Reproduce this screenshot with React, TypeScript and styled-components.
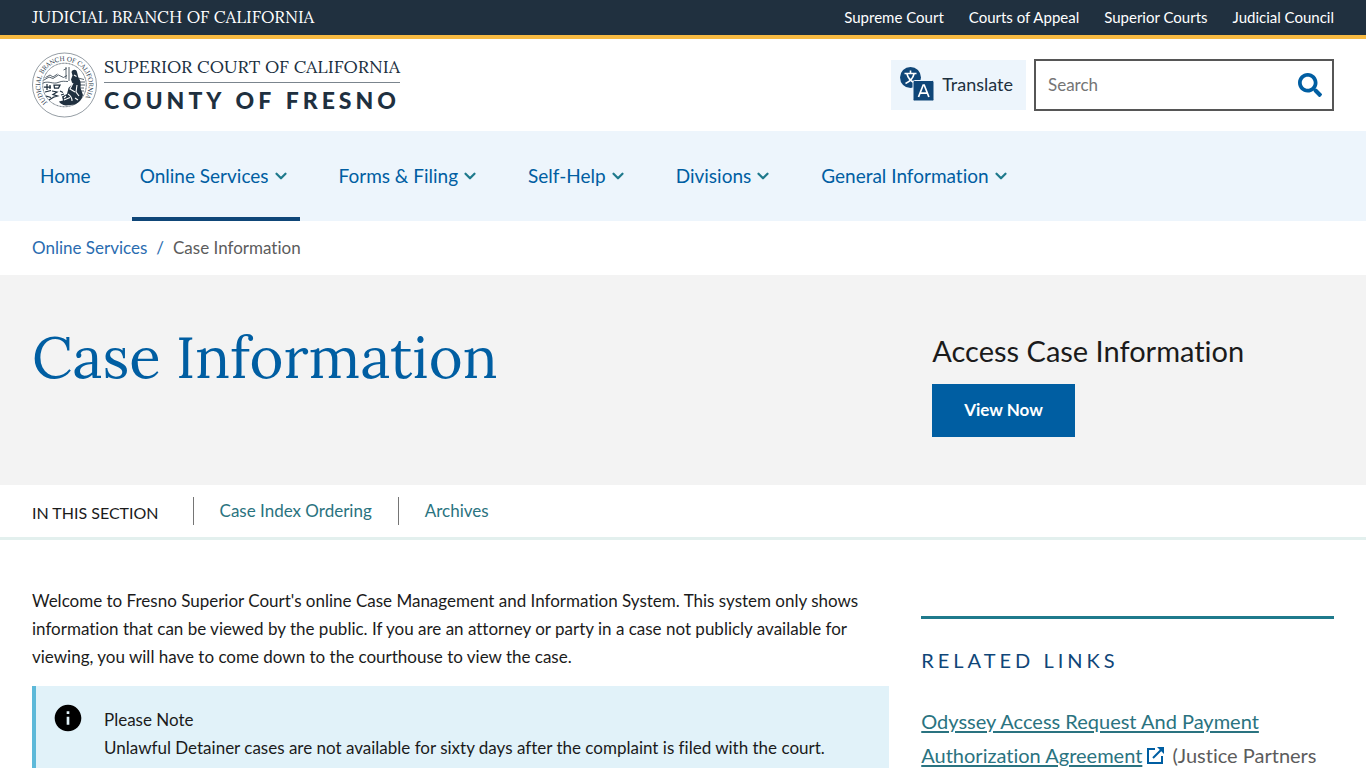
import React from "react";
import styled, { createGlobalStyle } from "styled-components";
import { FaSearch } from "react-icons/fa";
import { MdInfo } from "react-icons/md";
import { ChevronDown } from "lucide-react";

const sans = `Lato, "Liberation Sans", sans-serif`;
const serif = `Lora, "Liberation Serif", serif`;

const color = {
  navy: "#20303f",
  gold: "#f7ba42",
  blue: "#005ea2",
  darkBlue: "#0f4678",
  teal: "#1f7a8c",
  tealText: "#2a7380",
  pale: "#edf5fc",
  grey: "#f3f3f3",
  ink: "#1b1b1b",
  muted: "#5c5c5c",
};

const GlobalStyle = createGlobalStyle`
  *, *::before, *::after { box-sizing: border-box; }
  body {
    margin: 0;
    background: #fff;
    color: ${color.ink};
    font: 400 17px/28px ${sans};
    font-variant-ligatures: none;
  }
  a { text-decoration: none; }
  h1, h2, p, ul { margin: 0; padding: 0; font-weight: 400; }
  ul { list-style: none; }
`;

const TopBar = styled.div`
  display: flex;
  align-items: center;
  justify-content: space-between;
  height: 39px;
  padding: 0 32px 2px;
  background: ${color.navy};
  border-bottom: 4px solid ${color.gold};
`;

const BranchLink = styled.a`
  color: #fff;
  font: 400 17px/24px ${serif};
`;

const TopLinks = styled.ul`
  display: flex;
  gap: 25px;
`;

const TopLink = styled.a`
  display: block;
  color: #fff;
  font-size: 15px;
  line-height: 24px;
`;

const Header = styled.header`
  display: flex;
  align-items: center;
  justify-content: space-between;
  height: 92px;
  padding: 0 32px;
`;

const Brand = styled.a`
  display: flex;
  align-items: center;
  gap: 7px;
  padding-bottom: 1px;
  color: ${color.navy};
`;

const BrandName = styled.span`
  display: flex;
  flex-direction: column;
`;

const BrandCourt = styled.span`
  padding-bottom: 3px;
  border-bottom: 1px solid #7b858e;
  font: 400 18px/24px ${serif};
`;

const BrandCounty = styled.span`
  padding-top: 3px;
  font-size: 23px;
  font-weight: 900;
  line-height: 28px;
  letter-spacing: 4px;
  text-align-last: justify;
`;

const Tools = styled.div`
  display: flex;
  align-items: center;
  gap: 8px;
`;

const TranslateButton = styled.button`
  display: flex;
  align-items: center;
  gap: 8px;
  height: 50px;
  padding: 0 13px 2px 9px;
  border: 0;
  background: ${color.pale};
  color: ${color.navy};
  font: 400 18px/24px ${sans};
`;

const SearchForm = styled.form`
  display: flex;
  align-items: center;
  width: 300px;
  height: 52px;
  border: 2px solid #565656;
  background: #fff;
`;

const SearchInput = styled.input`
  flex: 1;
  min-width: 0;
  height: 100%;
  padding: 0 12px 2px;
  border: 0;
  outline: 0;
  background: transparent;
  font: 400 17px/24px ${sans};

  &::placeholder { color: #757575; opacity: 1; }
`;

const SearchButton = styled.button`
  display: flex;
  padding: 0 10px;
  border: 0;
  background: transparent;
  color: ${color.blue};
`;

const MainNav = styled.nav`
  background: ${color.pale};
  padding: 0 32px;
`;

const NavList = styled.ul`
  display: flex;
  gap: 31px;
`;

const NavLink = styled.a<{ $active?: boolean }>`
  display: flex;
  align-items: center;
  gap: 3px;
  height: 90px;
  padding: 4px 10px 0 8px;
  border-bottom: 4px solid ${(p) => (p.$active ? color.darkBlue : "transparent")};
  color: ${color.blue};
  font-size: 19px;

  svg { color: ${color.teal}; }
`;

const Breadcrumb = styled.nav`
  display: flex;
  align-items: center;
  gap: 9px;
  height: 54px;
  padding: 0 32px;
  color: ${color.muted};

  a, span { color: #2a6cb0; }
`;

const Hero = styled.section`
  display: grid;
  grid-template-columns: minmax(0, 67fr) minmax(0, 31fr);
  gap: 32px;
  height: 210px;
  padding: 48px 32px;
  background: ${color.grey};
`;

const Title = styled.h1`
  color: ${color.blue};
  font: 400 58px/68px ${serif};
`;

const Access = styled.div`
  display: flex;
  flex-direction: column;
  align-items: flex-start;
  gap: 15px;
  padding-top: 10px;
`;

const AccessTitle = styled.h2`
  font-size: 29px;
  line-height: 36px;
`;

const PrimaryLink = styled.a`
  padding: 11px 32px 13px;
  background: ${color.blue};
  color: #fff;
  font-size: 17px;
  font-weight: 700;
  line-height: 29px;
`;

const SectionNav = styled.nav`
  display: flex;
  align-items: center;
  height: 55px;
  padding: 0 32px;
  border-bottom: 3px solid #e3f0ee;
`;

const SectionLabel = styled.span`
  padding: 4px 34px 0 0;
  font-size: 16px;
  line-height: 24px;
`;

const SectionList = styled.ul`
  display: flex;
`;

const SectionItem = styled.li`
  padding: 0 26px;
  border-left: 1px solid #757575;

  a { color: ${color.tealText}; }
`;

const Content = styled.div`
  display: grid;
  grid-template-columns: minmax(0, 27fr) minmax(0, 13fr);
  gap: 32px;
  padding: 47px 32px 0;
`;

const Article = styled.main`
  display: flex;
  flex-direction: column;
  gap: 15px;
`;

const Note = styled.section`
  display: flex;
  gap: 20px;
  padding: 20px 16px;
  border-left: 4px solid #5db9d9;
  background: #e1f2f9;

  svg { flex: none; margin-top: -4px; color: #000; }
`;

const Related = styled.aside`
  margin-top: 29px;
  padding-top: 26px;
  border-top: 3px solid ${color.teal};
`;

const RelatedTitle = styled.h2`
  margin-bottom: 29px;
  color: ${color.darkBlue};
  font-size: 20px;
  line-height: 30px;
  letter-spacing: 4px;
`;

const RelatedItem = styled.li`
  color: ${color.muted};
  font-size: 20px;
  line-height: 34px;

  a {
    color: ${color.tealText};
    text-decoration: underline;
    text-decoration-thickness: 2px;
    text-underline-offset: 2px;
  }
  svg { margin: 0 3px 0 5px; vertical-align: -1px; }
`;

function Seal() {
  return (
    <svg width="65" height="66" viewBox="0 0 130 132" fill="none" stroke={color.navy} aria-hidden="true">
      <circle cx="65" cy="66" r="64" strokeWidth="1.2" opacity="0.8" />
      <circle cx="65" cy="66" r="43.500" strokeWidth="1.5" strokeDasharray="2 1" />
      <path id="seal-ring" d="M31 101A48.500 48.500 0 1 1 99 101" stroke="none" />
      <text fill={color.navy} stroke="none" fontFamily={serif} fontSize="13">
        <textPath href="#seal-ring">JUDICIAL BRANCH OF CALIFORNIA</textPath>
      </text>
      <g strokeWidth="1.5">
        <path d="M24 56l10-6 8 3 11-7 10 5 7-4M22 62c12-5 20 3 30-1s12-2 20-2M68 30v24M74 30v28M63 36l6-3M92 52l12 3M92 60h14M94 66h12M92 72h12M92 78h12M27 51l9-5 6 4 9-6" />
        <path d="M24 70h14M30 64v12M36 66v8M44 66h12l-3 6h-8zM26 80l12-3M40 78l10 2-8 5 9 3-10 3M28 88l10 3M34 96l10-6M56 78l6 3M58 86l6-2" strokeWidth="2.5" />
      </g>
      <path d="M79 40c2-6 10-6 11 0l3 12c5 5 5 14 4 20l5 14c-2 9-8 15-16 19l-18 2c-7-1-12-4-14-8l8-2-2-8 10-5 3-12 8-8-3-9 3-8z" fill={color.navy} stroke="none" />
      <path d="M72 84c5 3 8 8 8 14M82 62l-6 12 10 6M90 66l-2 14 6 8M64 96l12-5M84 46l5 3M68 88l-4 4M86 92l6 4" stroke="#fff" strokeWidth="2.2" />
    </svg>
  );
}

function TranslateIcon() {
  return (
    <svg width="34" height="34" viewBox="0 0 34 34" aria-hidden="true">
      <circle cx="10.500" cy="10.500" r="10.500" fill={color.darkBlue} />
      <path d="M4.500 6.500h12M10.500 3.500v3M14 7c-1 4-4 7.500-8.500 9.500M7 7c1 4 3 6.500 7 8.500" fill="none" stroke="#fff" strokeWidth="1.6" />
      <rect x="13" y="13.500" width="21" height="20.500" rx="1.5" fill={color.darkBlue} stroke={color.pale} />
      <path d="M18.500 30l4.700-12h1l4.700 12M20 26.200h7.400" fill="none" stroke="#fff" strokeWidth="1.7" />
    </svg>
  );
}

function ExternalIcon() {
  return (
    <svg width="17" height="17" viewBox="0 0 17 17" fill="none" stroke={color.blue} strokeWidth="2" aria-hidden="true">
      <path d="M8 2H1v14h14V9M6 11l9-9" />
      <path d="M10 0h7v7z" fill={color.blue} stroke="none" />
    </svg>
  );
}

const topLinks = ["Supreme Court", "Courts of Appeal", "Superior Courts", "Judicial Council"];

const navItems = [
  { label: "Home" },
  { label: "Online Services", menu: true, active: true },
  { label: "Forms & Filing", menu: true },
  { label: "Self-Help", menu: true },
  { label: "Divisions", menu: true },
  { label: "General Information", menu: true },
];

export default function App() {
  return (
    <>
      <GlobalStyle />
      <TopBar>
        <BranchLink href="#">JUDICIAL BRANCH OF CALIFORNIA</BranchLink>
        <TopLinks>
          {topLinks.map((label) => (
            <li key={label}><TopLink href="#">{label}</TopLink></li>
          ))}
        </TopLinks>
      </TopBar>
      <Header>
        <Brand href="#">
          <Seal />
          <BrandName>
            <BrandCourt>SUPERIOR COURT OF CALIFORNIA</BrandCourt>
            <BrandCounty>COUNTY OF FRESNO</BrandCounty>
          </BrandName>
        </Brand>
        <Tools>
          <TranslateButton type="button"><TranslateIcon />Translate</TranslateButton>
          <SearchForm role="search">
            <SearchInput type="search" placeholder="Search" aria-label="Search" />
            <SearchButton type="submit" aria-label="Submit search"><FaSearch size={24} /></SearchButton>
          </SearchForm>
        </Tools>
      </Header>
      <MainNav aria-label="Main">
        <NavList>
          {navItems.map((item) => (
            <li key={item.label}>
              <NavLink href="#" $active={item.active}>
                {item.label}
                {item.menu && <ChevronDown size={18} strokeWidth={3} />}
              </NavLink>
            </li>
          ))}
        </NavList>
      </MainNav>
      <Breadcrumb aria-label="Breadcrumb">
        <a href="#">Online Services</a>
        <span>/</span>
        Case Information
      </Breadcrumb>
      <Hero>
        <Title>Case Information</Title>
        <Access>
          <AccessTitle>Access Case Information</AccessTitle>
          <PrimaryLink href="#">View Now</PrimaryLink>
        </Access>
      </Hero>
      <SectionNav aria-label="In this section">
        <SectionLabel>IN THIS SECTION</SectionLabel>
        <SectionList>
          <SectionItem><a href="#">Case Index Ordering</a></SectionItem>
          <SectionItem><a href="#">Archives</a></SectionItem>
        </SectionList>
      </SectionNav>
      <Content>
        <Article>
          <p>
            Welcome to Fresno Superior Court's online Case Management and Information System. This system only shows
            information that can be viewed by the public. If you are an attorney or party in a case not publicly
            available for viewing, you will have to come down to the courthouse to view the case.
          </p>
          <Note>
            <MdInfo size={32} />
            <div>
              <p>Please Note</p>
              <p>Unlawful Detainer cases are not available for sixty days after the complaint is filed with the court.</p>
            </div>
          </Note>
        </Article>
        <Related>
          <RelatedTitle>RELATED LINKS</RelatedTitle>
          <ul>
            <RelatedItem>
              <a href="#">Odyssey Access Request And Payment Authorization Agreement</a>
              <ExternalIcon /> (Justice Partners
            </RelatedItem>
          </ul>
        </Related>
      </Content>
    </>
  );
}
